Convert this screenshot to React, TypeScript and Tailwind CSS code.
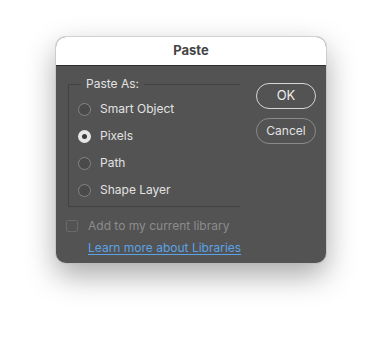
import React from 'react';

const options = ['Smart Object', 'Pixels', 'Path', 'Shape Layer'];

function Radio({ checked }: { checked?: boolean }) {
  if (checked) {
    return (
      <span className="flex h-[13px] w-[13px] items-center justify-center rounded-full bg-[#e6e6e6]">
        <span className="h-[5px] w-[5px] rounded-full bg-[#3a3a3a]" />
      </span>
    );
  }
  return <span className="h-[13px] w-[13px] rounded-full border border-[#858585] bg-[#4a4a4a]" />;
}

export default function App() {
  return (
    <div
      className="h-[338px] w-[382px] bg-white pl-[56px] pt-[37px]"
      style={{ fontFamily: 'Inter, "Liberation Sans", sans-serif' }}
    >
      <div className="flex h-[226px] w-[270px] flex-col overflow-hidden rounded-[10px] bg-[#535353] shadow-[0_12px_30px_rgba(0,0,0,0.35)] ring-1 ring-[#bdbdbd]/60">
        <div className="flex h-[29px] shrink-0 items-center justify-center border-b border-[#2e2e2e] bg-white text-[13px] font-bold text-[#444]">
          Paste
        </div>
        <div className="flex px-[12px] pt-[11px]">
          <fieldset className="m-0 h-[130px] w-[172px] border border-r-0 border-[#424242] p-0">
            <legend className="ml-[12px] px-[5px] text-[12px] leading-[14px] text-[#e2e2e2]">Paste As:</legend>
            <div className="mt-[10px] flex flex-col gap-[11px] pl-[9px]">
              {options.map((o) => (
                <label key={o} className="flex h-[16px] items-center gap-[9px] text-[12px] text-[#e2e2e2]">
                  <Radio checked={o === 'Pixels'} />
                  {o}
                </label>
              ))}
            </div>
          </fieldset>
          <div className="ml-auto mr-[-2px] mt-[6px] flex flex-col gap-[9px]">
            <button className="h-[26px] w-[60px] rounded-full border border-[#d6d6d6] text-[13px] text-[#ececec]">
              OK
            </button>
            <button className="h-[26px] w-[60px] rounded-full border border-[#8a8a8a] text-[12px] text-[#e2e2e2]">
              Cancel
            </button>
          </div>
        </div>
        <div className="mt-[11px] flex h-[16px] items-center gap-[10px] pl-[10px]">
          <span className="h-[12px] w-[12px] rounded-[2px] border border-[#6a6a6a]" />
          <span className="text-[12px] leading-[16px] text-[#8c8c8c]">Add to my current library</span>
        </div>
        <div className="mt-[4px] pl-[32px] leading-[16px]">
          <a className="text-[12px] text-[#5aa3e6] underline underline-offset-2">Learn more about Libraries</a>
        </div>
      </div>
    </div>
  );
}
